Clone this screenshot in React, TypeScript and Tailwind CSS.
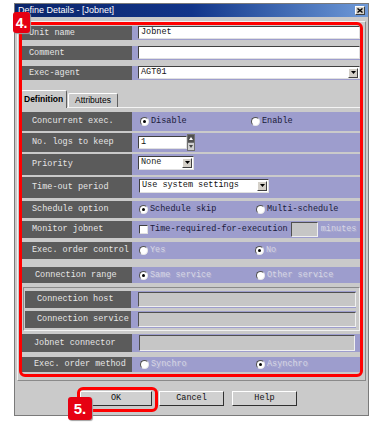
import React from 'react'

const mono = "font-['Liberation_Mono',monospace] text-[8.5px] leading-none"
const sans = "font-['Liberation_Sans',Arial,sans-serif]"

function Radio({ checked = false }: { checked?: boolean }) {
  return (
    <span className="w-[9px] h-[9px] shrink-0 rounded-full bg-white border border-t-[#505050] border-l-[#505050] border-r-[#e8e8e8] border-b-[#e8e8e8] flex items-center justify-center">
      {checked && <span className="w-[3px] h-[3px] rounded-full bg-black" />}
    </span>
  )
}

function Option({ label, checked, disabled, width }: { label: string; checked?: boolean; disabled?: boolean; width?: string }) {
  return (
    <div className={`flex items-center gap-[2px] ${width ?? ''}`}>
      <Radio checked={checked} />
      <span className={disabled ? 'text-[#d6d6e6] [text-shadow:1px_1px_0_#b0b0d0]' : 'text-[#1a1a3a]'}>{label}</span>
    </div>
  )
}

function Row({
  label,
  children,
  cls,
  labelCls = 'pl-[10px]',
  labelW = 'w-[110px]',
  valueCls = 'pl-[7px]',
}: {
  label: string
  children?: React.ReactNode
  cls: string
  labelCls?: string
  labelW?: string
  valueCls?: string
}) {
  return (
    <div className={`flex ${cls} ${mono}`}>
      <div className={`${labelW} shrink-0 bg-[#5b5b5b] text-[#e6e6e6] flex items-center ${labelCls}`}>{label}</div>
      <div className={`flex-1 bg-[#9d9dcd] flex items-center overflow-hidden ${valueCls}`}>{children}</div>
    </div>
  )
}

function DropBtn() {
  return (
    <span className="w-[10px] h-[10px] bg-[#d4d0c8] border border-t-white border-l-white border-r-[#404040] border-b-[#404040] flex items-center justify-center">
      <svg width="5" height="3" viewBox="0 0 5 3">
        <path d="M0 0h5L2.5 3z" fill="#000" />
      </svg>
    </span>
  )
}

function Field({ text, cls }: { text?: string; cls: string }) {
  return (
    <div className={`bg-white border border-t-[#404040] border-l-[#404040] border-r-[#e0e0e0] border-b-[#e0e0e0] flex items-center pl-[2px] text-[#111] ${cls}`}>
      {text}
    </div>
  )
}

function Gray({ cls }: { cls: string }) {
  return <div className={`bg-[#c6c6c6] border border-t-[#505050] border-l-[#505050] border-r-[#f0f0f0] border-b-[#f0f0f0] ${cls}`} />
}

function Btn({ label, w }: { label: string; w: string }) {
  return (
    <div className={`${w} h-[15px] bg-[#d0d0d0] border border-t-white border-l-white border-r-[#303030] border-b-[#303030] flex items-center justify-center ${mono} text-[#111]`}>
      {label}
    </div>
  )
}

export default function App() {
  return (
    <div className="relative w-[373px] h-[425px] bg-white overflow-hidden">
      <div className="pt-[3px] pl-[14px]">
        <div className="w-[355px] h-[413px] bg-[#cacaca] border border-[#7a7a7a] flex flex-col">
          {/* Title bar */}
          <div className="h-[13px] bg-gradient-to-r from-[#0a246a] via-[#12358a] to-[#6f9ad8] flex items-center justify-between pl-[3px] pr-[3px]">
            <span className={`${sans} text-[9px] text-white leading-none`}>Define Details - [Jobnet]</span>
            <span className="w-[10px] h-[9px] bg-[#d4d0c8] border border-t-white border-l-white border-r-[#404040] border-b-[#404040] flex items-center justify-center">
              <svg width="6" height="5" viewBox="0 0 6 5">
                <path d="M0.5 0.5L5.5 4.5M5.5 0.5L0.5 4.5" stroke="#000" strokeWidth="1.4" />
              </svg>
            </span>
          </div>

          {/* Frame */}
          <div className="mx-[2px] mt-[4px] h-[360px] border border-t-[#f2f2f2] border-l-[#f2f2f2] border-r-[#8a8a8a] border-b-[#8a8a8a] p-[4px] pb-[7px] flex flex-col">
            <Row label="Unit name" cls="h-[14px]" labelCls="pl-[7px]" valueCls="pl-[6px] pr-[1px] pb-[1px]">
              <Field text="Jobnet" cls="w-full h-full" />
            </Row>
            <Row label="Comment" cls="h-[14px] mt-[6px]" labelCls="pl-[7px]" valueCls="pl-[6px] pr-[1px] pb-[1px]">
              <Field cls="w-full h-full" />
            </Row>
            <Row label="Exec-agent" cls="h-[14px] mt-[6px]" labelCls="pl-[7px]" valueCls="pl-[6px] pr-[1px] pb-[1px]">
              <div className="w-full h-full bg-white border border-t-[#404040] border-l-[#404040] border-r-[#e0e0e0] border-b-[#e0e0e0] flex items-center justify-between pl-[2px] pr-[1px] text-[#111]">
                AGT01
                <DropBtn />
              </div>
            </Row>

            {/* Tabs */}
            <div className={`mt-[10px] h-[18px] flex items-end -ml-[1px] border-b border-[#f4f4f4] ${sans} text-[8.5px] leading-none`}>
              <div className="w-[46px] h-[18px] -mb-[1px] bg-[#cacaca] border-t border-l border-r border-t-white border-l-white border-r-[#606060] rounded-t-[2px] flex items-center pl-[2px] font-bold text-black">
                Definition
              </div>
              <div className="ml-[1px] w-[50px] h-[14px] border-t border-l border-r border-t-white border-l-white border-r-[#606060] rounded-t-[2px] flex items-center pl-[6px] text-black">
                Attributes
              </div>
            </div>

            <Row label="Concurrent exec." cls="h-[19px] mt-[4px]" valueCls="pl-[8px]">
              <Option label="Disable" checked width="w-[111px]" />
              <Option label="Enable" />
            </Row>
            <Row label="No. logs to keep" cls="h-[19px] mt-[2px]" valueCls="pl-[6px]">
              <Field text="1" cls="w-[49px] h-[13px]" />
              <div className="w-[8px] h-[17px] flex flex-col bg-[#d0d0d0] border border-[#707070]">
                <div className="flex-1 flex items-center justify-center border-b border-[#707070] bg-[#505050]">
                  <svg width="4" height="3" viewBox="0 0 4 3"><path d="M0 3h4L2 0z" fill="#fff" /></svg>
                </div>
                <div className="flex-1 flex items-center justify-center">
                  <svg width="4" height="3" viewBox="0 0 4 3"><path d="M0 0h4L2 3z" fill="#444" /></svg>
                </div>
              </div>
            </Row>
            <Row label="Priority" cls="h-[21px] mt-[2px]" valueCls="pl-[6px] pb-[4px]">
              <div className="w-[56px] h-[14px] bg-white border border-t-[#404040] border-l-[#404040] border-r-[#e0e0e0] border-b-[#e0e0e0] flex items-center justify-between pl-[2px] pr-[1px] text-[#222]">
                None
                <DropBtn />
              </div>
            </Row>
            <Row label="Time-out period" cls="h-[21px] mt-[2px]" valueCls="pl-[7px] pb-[4px]">
              <div className="w-[130px] h-[14px] bg-white border border-t-[#404040] border-l-[#404040] border-r-[#e0e0e0] border-b-[#e0e0e0] flex items-center justify-between pl-[2px] pr-[1px] text-[#111]">
                Use system settings
                <DropBtn />
              </div>
            </Row>
            <Row label="Schedule option" cls="h-[17px] mt-[3px]">
              <Option label="Schedule skip" checked width="w-[117px]" />
              <Option label="Multi-schedule" />
            </Row>
            <Row label="Monitor jobnet" cls="h-[17px] mt-[3px]">
              <span className="w-[9px] h-[9px] shrink-0 bg-white border border-t-[#404040] border-l-[#404040] border-r-[#e0e0e0] border-b-[#e0e0e0]" />
              <span className="ml-[2px] text-[#1a1a3a] whitespace-nowrap">Time-required-for-execution</span>
              <Gray cls="ml-[3px] w-[27px] h-[15px] shrink-0" />
              <span className="ml-[3px] text-[#d6d6e6] [text-shadow:1px_1px_0_#b0b0d0] whitespace-nowrap">minutes</span>
            </Row>
            <Row label="Exec. order control" cls="h-[17px] mt-[4px]" labelCls="pl-[10px]">
              <Option label="Yes" disabled width="w-[116px]" />
              <Option label="No" checked disabled />
            </Row>

            <Row label="Connection range" cls="h-[16px] mt-[8px]" labelCls="pl-[13px]">
              <Option label="Same service" checked disabled width="w-[117px]" />
              <Option label="Other service" disabled />
            </Row>

            {/* Group box */}
            <div className="mt-[4px] mx-[1px] border border-t-[#8a8a8a] border-l-[#8a8a8a] border-r-[#f2f2f2] border-b-[#f2f2f2] pl-[1px] pr-[3px] pt-[3px] pb-[2px] flex flex-col">
              <Row label="Connection host" cls="h-[17px]" labelW="w-[106px]" labelCls="pl-[12px]" valueCls="pl-[7px]">
                <Gray cls="w-full h-[15px]" />
              </Row>
              <Row label="Connection service" cls="h-[17px] mt-[3px]" labelW="w-[106px]" labelCls="pl-[12px]" valueCls="pl-[7px]">
                <Gray cls="w-full h-[15px]" />
              </Row>
            </div>

            <Row label="Jobnet connector" cls="h-[18px] mt-[3px]" labelCls="pl-[12px]" valueCls="pl-[7px] pr-[6px]">
              <Gray cls="w-full h-[16px]" />
            </Row>
            <Row label="Exec. order method" cls="h-[15px] mt-[5px]" labelCls="pl-[12px]" valueCls="pl-[8px]">
              <Option label="Synchro" disabled width="w-[116px]" />
              <Option label="Asynchro" checked disabled />
            </Row>
          </div>

          {/* Buttons */}
          <div className="mt-[10px] ml-[65px] flex">
            <Btn label="OK" w="w-[72px]" />
            <div className="ml-[7px]">
              <Btn label="Cancel" w="w-[65px]" />
            </div>
            <div className="ml-[8px]">
              <Btn label="Help" w="w-[65px]" />
            </div>
          </div>
        </div>
      </div>

      {/* Callout overlays */}
      <div className="absolute left-[19px] top-[22px] w-[344px] h-[355px] border-[3px] border-[#ff0000] rounded-[6px]" />
      <div className="absolute left-[77px] top-[387px] w-[81px] h-[25px] border-[3px] border-[#ff0000] rounded-[6px]" />
      <div className={`absolute left-[13px] top-[12px] w-[17px] h-[21px] bg-[#e60012] rounded-[3px] shadow-[1px_1px_1px_#a0a0a0] flex items-center justify-center ${sans} text-[14px] font-bold text-white leading-none`}>
        4.
      </div>
      <div className={`absolute left-[68px] top-[397px] w-[24px] h-[23px] bg-[#e60012] rounded-[3px] shadow-[1px_1px_1px_#a0a0a0] flex items-center justify-center ${sans} text-[15px] font-bold text-white leading-none`}>
        5.
      </div>
    </div>
  )
}
